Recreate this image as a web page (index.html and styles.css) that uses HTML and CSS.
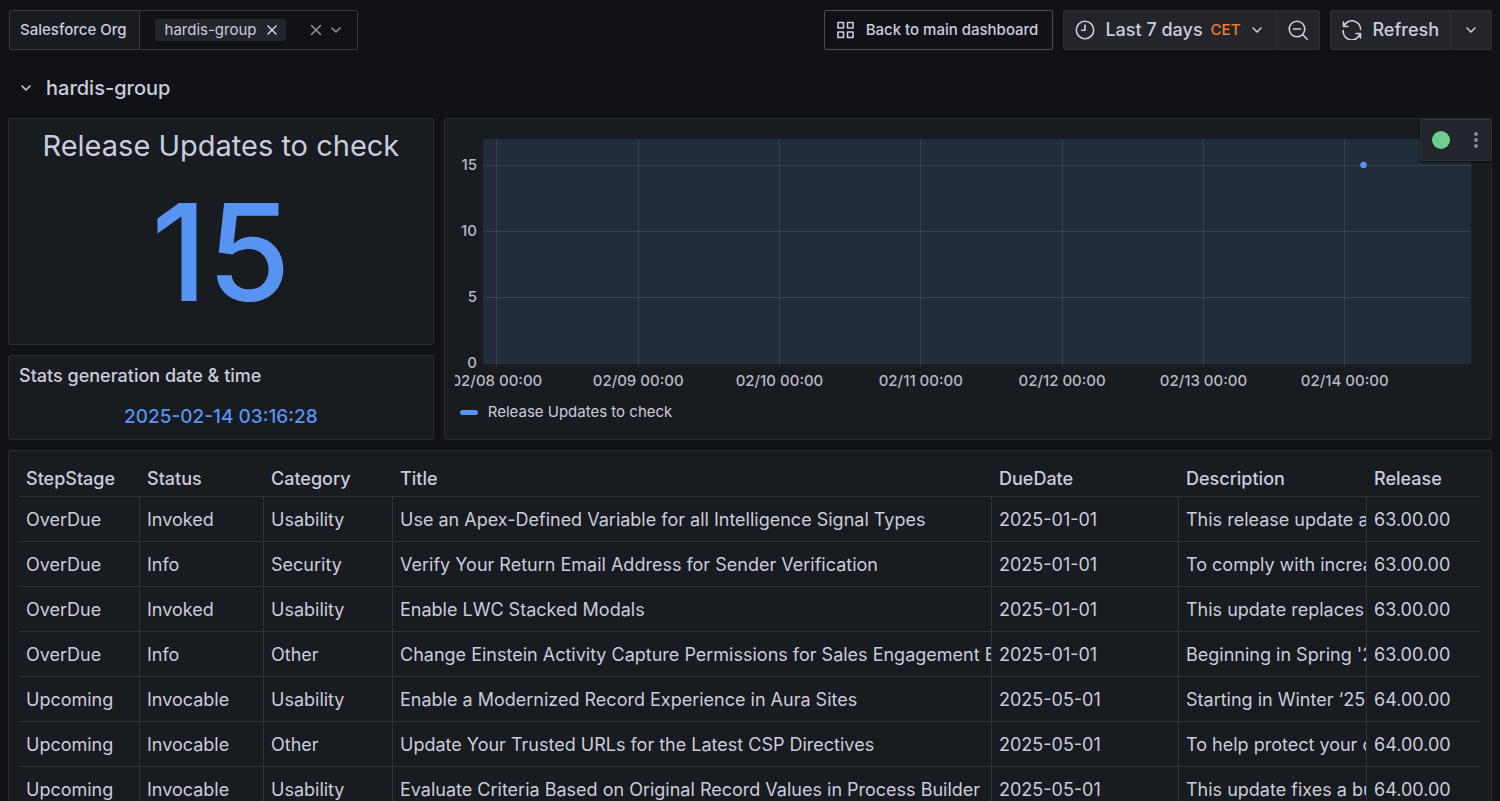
FILE: index.html
```html
<!DOCTYPE html>
<html lang="en">
<head>
<meta charset="utf-8">
<title>Release Updates</title>
<link rel="stylesheet" href="styles.css">
</head>
<body>
<header class="toolbar">
  <div class="variable">
    <label class="variable-label" for="org">Salesforce Org</label>
    <div class="variable-box">
      <span class="chip">hardis-group
        <button class="bare" type="button" aria-label="Remove hardis-group"><svg class="icon-sm" viewBox="0 0 14 14"><path d="M3 3l8 8M11 3l-8 8"/></svg></button>
      </span>
      <input class="variable-input" id="org" type="text">
      <button class="bare muted" type="button" aria-label="Clear"><svg class="icon-sm" viewBox="0 0 14 14"><path d="M2.5 2.5l9 9M11.5 2.5l-9 9"/></svg></button>
      <button class="bare muted" type="button" aria-label="Open"><svg class="icon-sm" viewBox="0 0 14 14"><path d="M3 5l4 4 4-4"/></svg></button>
    </div>
  </div>
  <div class="actions">
    <a class="dash-link" href="#"><svg class="icon-md" viewBox="0 0 20 20"><path d="M2 2.5h5.5v5.5H2zM11.5 2.5h5.5v5.5h-5.5zM2 12h5.5v5.5H2zM11.5 12h5.5v5.5h-5.5z"/></svg>Back to main dashboard</a>
    <div class="group">
      <button class="btn btn-time" type="button"><svg class="icon-md" viewBox="0 0 20 20"><circle cx="10" cy="10" r="8.7"/><path d="M10 5v5.3H6.8"/></svg><span>Last 7 days</span><span class="zone">CET</span><svg class="icon-sm" viewBox="0 0 14 14"><path d="M3 5l4 4 4-4"/></svg></button>
      <button class="btn" type="button" aria-label="Zoom out"><svg class="icon-md" viewBox="0 0 20 20"><circle cx="9" cy="9" r="7.8"/><path d="M14.7 14.7l4.5 4.5M5.5 9h7"/></svg></button>
    </div>
    <div class="group">
      <button class="btn" type="button"><svg class="icon-md" viewBox="0 0 20 20"><path d="M1.5 2v4.5h4.5M2 6.2A8.6 8.6 0 0 1 18.6 9.5M1.2 10.5A8.6 8.6 0 0 0 18 13.8M18.5 18v-4.5h-4.5"/></svg><span>Refresh</span></button>
      <button class="btn btn-interval" type="button" aria-label="Refresh interval"><svg class="icon-sm" viewBox="0 0 14 14"><path d="M3 5l4 4 4-4"/></svg></button>
    </div>
  </div>
</header>
<main class="dashboard">
  <h1 class="row-title"><button class="row-toggle" type="button"><svg class="icon-sm" viewBox="0 0 14 14"><path d="M3 5l4 4 4-4"/></svg>hardis-group</button></h1>
  <div class="grid">
    <div class="side">
      <section class="panel stat">
        <h2 class="stat-title">Release Updates to check</h2>
        <div class="stat-value">15</div>
      </section>
      <section class="panel stamp">
        <h2 class="panel-title">Stats generation date &amp; time</h2>
        <div class="stamp-value">2025-02-14 03:16:28</div>
      </section>
    </div>
    <section class="panel chart">
      <div class="chart-canvas">
        <svg class="plot" role="img" aria-label="Release Updates to check over time">
          <rect class="area" width="100%" height="100%"/>
          <g class="rules">
            <line x1="0" x2="100%" y1="26" y2="26"/><line x1="0" x2="100%" y1="92" y2="92"/><line x1="0" x2="100%" y1="158" y2="158"/><line x1="0" x2="100%" y1="224" y2="224"/>
            <line x1="1.4%" x2="1.4%" y1="0" y2="229"/><line x1="15.7%" x2="15.7%" y1="0" y2="229"/><line x1="30%" x2="30%" y1="0" y2="229"/><line x1="44.3%" x2="44.3%" y1="0" y2="229"/><line x1="58.6%" x2="58.6%" y1="0" y2="229"/><line x1="72.9%" x2="72.9%" y1="0" y2="229"/><line x1="87.2%" x2="87.2%" y1="0" y2="229"/>
          </g>
          <g class="y-labels"><text x="-6" y="31">15</text><text x="-6" y="97">10</text><text x="-6" y="163">5</text><text x="-6" y="229">0</text></g>
          <g class="x-labels"><text x="1.4%" y="247">02/08 00:00</text><text x="15.7%" y="247">02/09 00:00</text><text x="30%" y="247">02/10 00:00</text><text x="44.3%" y="247">02/11 00:00</text><text x="58.6%" y="247">02/12 00:00</text><text x="72.9%" y="247">02/13 00:00</text><text x="87.2%" y="247">02/14 00:00</text></g>
          <circle class="point" cx="89.1%" cy="26" r="3.2"/>
        </svg>
      </div>
      <div class="legend"><span class="legend-mark"></span>Release Updates to check</div>
      <div class="hover-menu">
        <span class="live-dot"></span>
        <button class="bare muted" type="button" aria-label="Menu"><svg class="icon-md dots" viewBox="0 0 20 20"><circle cx="10" cy="4" r="1.9"/><circle cx="10" cy="10" r="1.9"/><circle cx="10" cy="16" r="1.9"/></svg></button>
      </div>
    </section>
    <section class="panel table-panel">
      <table>
        <colgroup><col class="c-step"><col class="c-status"><col class="c-category"><col><col class="c-date"><col class="c-description"><col class="c-release"></colgroup>
        <thead><tr><th>StepStage</th><th>Status</th><th>Category</th><th>Title</th><th>DueDate</th><th>Description</th><th>Release</th></tr></thead>
        <tbody>
          <tr><td>OverDue</td><td>Invoked</td><td>Usability</td><td>Use an Apex-Defined Variable for all Intelligence Signal Types</td><td>2025-01-01</td><td>This release update a</td><td>63.00.00</td></tr>
          <tr><td>OverDue</td><td>Info</td><td>Security</td><td>Verify Your Return Email Address for Sender Verification</td><td>2025-01-01</td><td>To comply with increa</td><td>63.00.00</td></tr>
          <tr><td>OverDue</td><td>Invoked</td><td>Usability</td><td>Enable LWC Stacked Modals</td><td>2025-01-01</td><td>This update replaces</td><td>63.00.00</td></tr>
          <tr><td>OverDue</td><td>Info</td><td>Other</td><td>Change Einstein Activity Capture Permissions for Sales Engagement B</td><td>2025-01-01</td><td>Beginning in Spring '2</td><td>63.00.00</td></tr>
          <tr><td>Upcoming</td><td>Invocable</td><td>Usability</td><td>Enable a Modernized Record Experience in Aura Sites</td><td>2025-05-01</td><td>Starting in Winter ‘25,</td><td>64.00.00</td></tr>
          <tr><td>Upcoming</td><td>Invocable</td><td>Other</td><td>Update Your Trusted URLs for the Latest CSP Directives</td><td>2025-05-01</td><td>To help protect your c</td><td>64.00.00</td></tr>
          <tr><td>Upcoming</td><td>Invocable</td><td>Usability</td><td>Evaluate Criteria Based on Original Record Values in Process Builder</td><td>2025-05-01</td><td>This update fixes a bu</td><td>64.00.00</td></tr>
        </tbody>
      </table>
    </section>
  </div>
</main>
</body>
</html>
```
FILE: styles.css
```css
* { box-sizing: border-box; }
html { background: #111217; scrollbar-width: none; }
body { margin: 0; color: #ccccdc; font-family: Inter, "Liberation Sans", sans-serif; font-size: 18px; line-height: 24px; }
button, input { font: inherit; color: inherit; }
button { cursor: pointer; }
h1, h2 { margin: 0; font-weight: 500; }
svg { fill: none; stroke: currentColor; stroke-width: 1.6; stroke-linecap: round; stroke-linejoin: round; flex: none; }
.icon-sm { display: block; width: 14px; height: 14px; }
.icon-md { display: block; width: 20px; height: 20px; }
.bare { display: block; padding: 0; border: 0; background: none; }
.muted { color: #8e8f9a; }

.toolbar { display: flex; justify-content: space-between; padding: 10px 8px 0 9px; }
.variable { display: flex; height: 40px; font-size: 15px; }
.variable-label { display: flex; align-items: center; padding: 0 12px 0 10px; border: 1px solid #3a3b41; border-radius: 2px 0 0 2px; background: #181b1f; font-weight: 500; }
.variable-box { display: flex; align-items: center; gap: 6px; padding: 0 14px 0 15px; border: 1px solid #3a3b41; border-left: 0; border-radius: 0 2px 2px 0; }
.chip { display: flex; align-items: center; gap: 8px; height: 22px; padding: 0 7px 0 10px; border-radius: 2px; background: #22252b; }
.variable-input { width: 11px; padding: 0; border: 0; outline: 0; background: none; }

.actions { display: flex; gap: 10px; }
.dash-link { display: flex; align-items: center; gap: 10px; height: 40px; padding: 0 14px 0 11px; border: 1px solid #4b4c54; border-radius: 2px; color: inherit; font-size: 15px; font-weight: 500; text-decoration: none; }
.group { display: flex; height: 40px; }
.btn { display: flex; align-items: center; gap: 10px; padding: 0 11px; border: 1px solid #303137; background: #24252b; font-weight: 500; }
.btn + .btn { border-left: 0; }
.btn-time { padding-right: 12px; }
.btn-interval { padding: 0 13px; }
.btn:first-child { border-radius: 2px 0 0 2px; }
.btn:last-child { border-radius: 0 2px 2px 0; }
.zone { margin-left: -2px; color: #f27a2b; font-size: 15px; }

.dashboard { padding: 0 8px; }
.row-title { padding: 26px 11px 18px; font-size: 20px; }
.row-toggle { display: flex; align-items: center; gap: 13px; padding: 0; border: 0; background: none; }

.grid { display: grid; grid-template-columns: repeat(24, minmax(0, 1fr)); gap: 10px; }
.panel { border: 1px solid #2b2d33; border-radius: 2px; background: #181b1f; }
.side { grid-column: span 7; display: flex; flex-direction: column; gap: 10px; }
.stat { flex: 1; text-align: center; }
.stat-title { padding-top: 9px; font-size: 29px; font-weight: 400; line-height: 36px; }
.stat-value { padding-top: 20px; color: #5794f2; font-size: 135px; font-weight: 500; line-height: 136px; }
.stamp { height: 85px; padding: 8px 10px; }
.panel-title { font-size: 18px; }
.stamp-value { padding-top: 17px; color: #5794f2; font-size: 19px; font-weight: 500; text-align: center; }

.chart { grid-column: span 17; position: relative; padding: 20px 10px 15px; }
.chart-canvas { height: 256px; padding: 0 10px 0 28px; overflow: hidden; }
.plot { display: block; width: 100%; height: 224px; overflow: visible; }
.area { fill: #212c3d; stroke: none; }
.rules { stroke: rgba(204, 204, 220, 0.12); stroke-width: 1; stroke-linecap: butt; shape-rendering: crispEdges; }
.y-labels, .x-labels { fill: #b8b9c4; stroke: none; font-size: 15px; font-weight: 500; }
.y-labels { text-anchor: end; }
.x-labels { text-anchor: middle; }
.point { fill: #5794f2; stroke: none; }
.legend { display: flex; align-items: center; gap: 10px; padding: 5px 5px 0; font-size: 15px; }
.legend-mark { width: 18px; height: 5px; border-radius: 3px; background: #5794f2; }
.hover-menu { position: absolute; top: 0; right: -1px; display: flex; align-items: center; gap: 16px; height: 42px; padding: 0 5px 0 11px; border: 1px solid #303137; border-radius: 2px; background: #22252b; box-shadow: 0 1px 2px #0b0c0e; }
.live-dot { width: 18px; height: 18px; border-radius: 50%; background: #6ccf8e; }
.dots { fill: currentColor; stroke: none; }

.table-panel { grid-column: 1 / -1; padding: 10px 11px 10px 10px; }
table { width: 100%; table-layout: fixed; border-collapse: separate; border-spacing: 0; }
.c-step { width: 121px; }
.c-status { width: 124px; }
.c-category { width: 129px; }
.c-date { width: 187px; }
.c-description { width: 188px; }
.c-release { width: 113px; }
th, td { padding: 0 0 0 7px; border-bottom: 1px solid #2f3136; overflow: hidden; text-align: left; white-space: nowrap; }
th { height: 36px; font-weight: 500; }
td { height: 45px; padding-top: 2px; border-right: 1px solid #2f3136; }
td:last-child { border-right: 0; }
```
